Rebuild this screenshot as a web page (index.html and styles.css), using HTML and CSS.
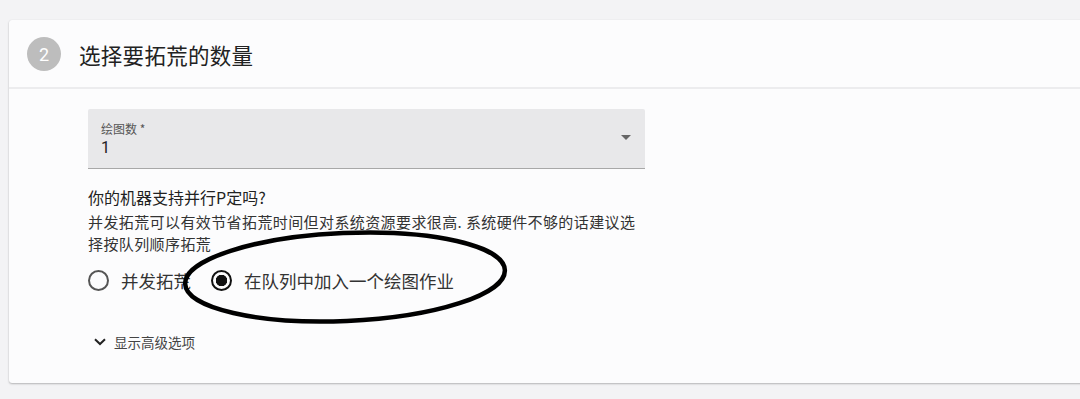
FILE: index.html
```html
<!DOCTYPE html>
<html lang="zh">
<head>
<meta charset="utf-8">
<link rel="stylesheet" href="styles.css">
</head>
<body>
<div class="page">
  <section class="card">
    <header class="card-head">
      <span class="step">2</span>
      <h2 class="title">选择要拓荒的数量</h2>
    </header>
    <div class="card-body">
      <div class="select">
        <div class="select-text">
          <span class="select-label">绘图数 *</span>
          <span class="select-value">1</span>
        </div>
        <span class="select-arrow"></span>
      </div>
      <p class="question">你的机器支持并行P定吗?</p>
      <p class="desc">并发拓荒可以有效节省拓荒时间但对系统资源要求很高. 系统硬件不够的话建议选择按队列顺序拓荒</p>
      <div class="radios">
        <label class="radio"><span class="radio-dot"></span>并发拓荒</label>
        <label class="radio"><span class="radio-dot checked"></span>在队列中加入一个绘图作业</label>
      </div>
      <div class="advanced">
        <svg class="chev" width="12" height="8" viewBox="0 0 12 8"><path d="M1 1.2 L6 6 L11 1.2" fill="none" stroke="#222" stroke-width="2"/></svg>
        <span>显示高级选项</span>
      </div>
    </div>
  </section>
  <svg class="ellipse" width="340" height="110" viewBox="0 0 340 110">
    <ellipse cx="170" cy="55" rx="160" ry="44" transform="rotate(-2.5 170 55)" fill="none" stroke="#000" stroke-width="4.5"/>
  </svg>
</div>
</body>
</html>
```

FILE: styles.css
```css
html, body {
  margin: 0;
  padding: 0;
  background: #f3f3f5;
  font-family: "Noto Sans CJK SC", "Noto Sans", sans-serif;
  overflow: hidden;
}
.page {
  position: relative;
  width: 1080px;
  height: 399px;
  padding: 20px 0 0 9px;
  box-sizing: border-box;
}
.card {
  background: #fcfcfd;
  width: 1090px;
  height: 363px;
  border-radius: 3px;
  box-shadow: 0 1px 2px rgba(0,0,0,0.25), 0 0 1px rgba(0,0,0,0.08);
  display: flex;
  flex-direction: column;
}
.card-head {
  height: 69px;
  display: flex;
  align-items: center;
  padding-left: 18px;
  gap: 18px;
  border-bottom: 2px solid #ececee;
  box-sizing: border-box;
  padding-top: 1px;
}
.step {
  width: 34px;
  height: 34px;
  border-radius: 50%;
  background: #bdbdbd;
  color: #fff;
  font-family: "Roboto", sans-serif;
  font-size: 18px;
  display: flex;
  align-items: center;
  justify-content: center;
}
.title {
  margin: 0;
  font-weight: 400;
  font-size: 21.5px;
  color: #222;
  letter-spacing: 0.3px;
}
.card-body {
  padding: 20px 0 0 79px;
  display: flex;
  flex-direction: column;
}
.select {
  width: 557px;
  height: 60px;
  background: #e8e8ea;
  border-bottom: 1px solid #a8a8a8;
  box-sizing: border-box;
  display: flex;
  align-items: center;
  padding: 0 14px 0 13px;
  border-radius: 2px 2px 0 0;
}
.select-text {
  flex: 1;
  display: flex;
  flex-direction: column;
  padding-top: 2px;
}
.select-label {
  font-size: 12px;
  color: #555;
  line-height: 16px;
}
.select-value {
  font-family: "Roboto", sans-serif;
  font-size: 16px;
  color: #222;
  line-height: 22px;
}
.select-arrow {
  width: 0;
  height: 0;
  border-left: 5px solid transparent;
  border-right: 5px solid transparent;
  border-top: 5px solid #666;
  margin-top: -2px;
}
.question {
  margin: 17px 0 0;
  font-size: 16px;
  line-height: 22px;
  color: #222;
}
.desc {
  margin: 3px 0 0;
  width: 556px;
  font-size: 15px;
  letter-spacing: 0.4px;
  line-height: 22px;
  color: #333;
}
.radios {
  display: flex;
  align-items: center;
  gap: 20px;
  margin-top: 13px;
  height: 24px;
}
.radio {
  display: flex;
  align-items: center;
  gap: 12px;
  font-size: 17.5px;
  color: #333;
}
.radio-dot {
  width: 17px;
  height: 17px;
  border: 2px solid #555;
  border-radius: 50%;
  box-sizing: content-box;
}
.radio-dot.checked {
  border-color: #111;
  background: radial-gradient(circle, #111 0 5.5px, transparent 6px);
}
.advanced {
  margin-top: 40px;
  display: flex;
  align-items: center;
  gap: 8px;
  font-size: 13.5px;
  color: #444;
  padding-left: 6px;
}
.ellipse {
  position: absolute;
  left: 175px;
  top: 222px;
}
```
